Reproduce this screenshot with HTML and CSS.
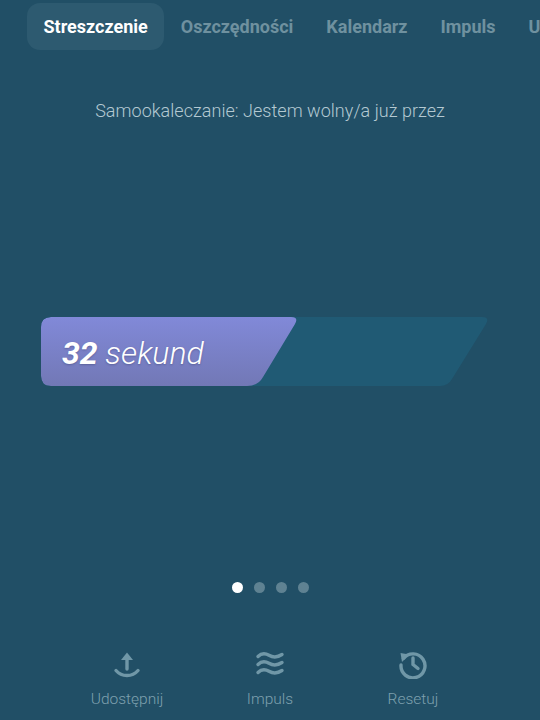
FILE: index.html
```html
<!DOCTYPE html>
<html lang="pl">
<head>
<meta charset="utf-8">
<title>Streszczenie</title>
<link rel="stylesheet" href="styles.css">
</head>
<body>
<main class="screen">
  <nav class="tabs">
    <span class="tab active">Streszczenie</span>
    <span class="tab">Oszczędności</span>
    <span class="tab">Kalendarz</span>
    <span class="tab">Impuls</span>
    <span class="tab">Ustawienia</span>
  </nav>
  <p class="subtitle">Samookaleczanie: Jestem wolny/a już przez</p>
  <div class="track">
    <div class="fill"><span class="time"><b>32</b> sekund</span></div>
  </div>
  <div class="dots">
    <span class="dot on"></span><span class="dot"></span><span class="dot"></span><span class="dot"></span>
  </div>
  <footer class="actions">
    <div class="action">
      <svg class="icon" viewBox="0 0 30 30"><path d="M15 20V8M4 21.500C7 25 10.500 26.500 15 26.500s8-1.500 11-5"/><path class="solid" d="M15 3.500 21 11H9Z"/></svg>
      <span class="label">Udostępnij</span>
    </div>
    <div class="action">
      <svg class="icon" viewBox="0 0 30 30"><path d="M3 7.500C6.500 4 10 4 14 6.300s8 2.500 13-.8M3 15.500C6.500 12 10 12 14 14.300s8 2.500 13-.8M3 23.500C6.500 20 10 20 14 22.300s8 2.500 13-.8"/></svg>
      <span class="label">Impuls</span>
    </div>
    <div class="action">
      <svg class="icon" viewBox="0 0 30 30"><path d="M5.500 9.500A12 12 0 1 1 3 16"/><path class="solid" d="M2.500 4 11 5.500 4 13Z"/><path d="M15 9V15.500L20 19.500"/></svg>
      <span class="label">Resetuj</span>
    </div>
  </footer>
</main>
</body>
</html>
```
FILE: styles.css
```css
* { box-sizing: border-box; }
html, body { margin: 0; padding: 0; }
body {
  background: #214f66;
  font-family: Roboto, "Liberation Sans", sans-serif;
  overflow: hidden;
}
.screen {
  width: 540px;
  height: 720px;
  padding-top: 3px;
  display: flex;
  flex-direction: column;
  overflow: hidden;
}
.tabs {
  display: flex;
  gap: 0;
  padding-left: 27px;
  white-space: nowrap;
  flex: none;
}
.tab {
  height: 47px;
  padding: 0 16.500px;
  line-height: 47px;
  font-size: 18px;
  font-weight: 700;
  color: #6f919f;
  border-radius: 13px;
  flex: none;
}
.tab.active {
  background: #2d5a70;
  color: #fff;
}
.subtitle {
  margin: 49px 0 0;
  text-align: center;
  font-size: 18px;
  letter-spacing: .03px;
  line-height: 24px;
  font-weight: 300;
  color: #b4c9d2;
}
.track {
  margin: 194px 0 0 41px;
  width: 447px;
  height: 69px;
  background: #205a74;
  clip-path: path("M10 0H441Q449 0 445 7L411 62Q407 69 399 69H10Q0 69 0 59V10Q0 0 10 0Z");
  flex: none;
}
.fill {
  width: 256px;
  height: 69px;
  padding: 2px 0 0 21px;
  display: flex;
  align-items: center;
  background: linear-gradient(#8189d8, #7278b6);
  clip-path: path("M10 0H250Q258 0 254 7L222 60Q217 69 206 69H10Q0 69 0 59V10Q0 0 10 0Z");
}
.time {
  font-size: 32px;
  font-style: italic;
  font-weight: 300;
  color: #fff;
  text-shadow: 0 1px 2px rgba(40, 45, 90, .35);
}
.time b { font-weight: 700; }
.dots {
  display: flex;
  justify-content: center;
  gap: 11px;
  margin-top: 196px;
  flex: none;
}
.dot {
  width: 11px;
  height: 11px;
  border-radius: 50%;
  background: #5f8292;
}
.dot.on { background: #fff; }
.actions {
  display: grid;
  grid-template-columns: repeat(3, 143px);
  justify-content: center;
  margin-top: 56px;
  flex: none;
}
.action {
  display: flex;
  flex-direction: column;
  align-items: center;
}
.icon {
  width: 30px;
  height: 30px;
  fill: none;
  stroke: #7097a7;
  stroke-width: 3.400;
  stroke-linecap: round;
}
.icon .solid { fill: #7097a7; stroke: none; }
.label {
  margin-top: 10px;
  font-size: 15.500px;
  line-height: 20px;
  font-weight: 300;
  color: #7ea0ae;
}
```
